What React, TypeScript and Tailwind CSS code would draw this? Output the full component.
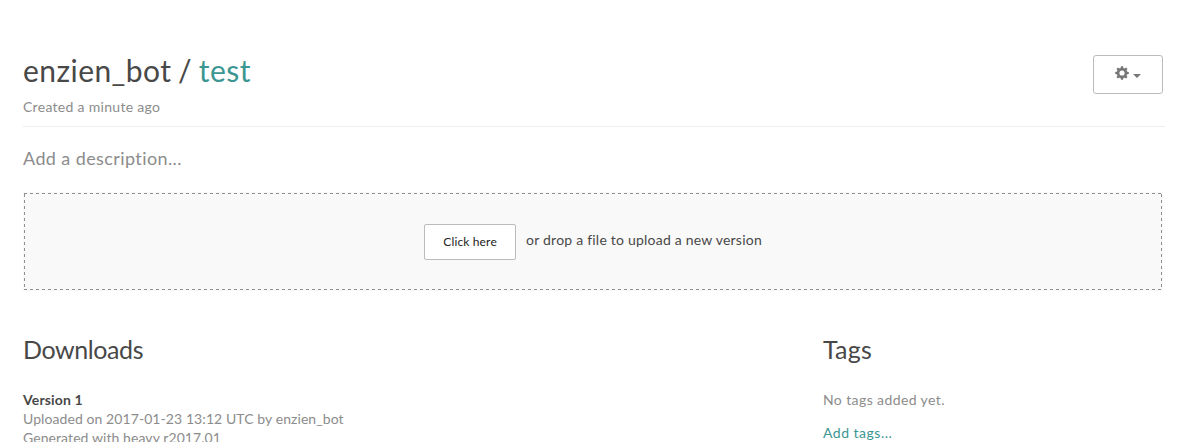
import type { ReactNode } from "react";

const teeth = [0, 45, 90, 135, 180, 225, 270, 315];

function Gear() {
  return (
    <svg className="-mt-px size-3.5" viewBox="-7 -7 14 14" aria-hidden="true">
      <circle r="3.9" fill="none" stroke="#777" strokeWidth="2.6" />
      {teeth.map((a) => (
        <path key={a} d="M-1.5-4.6L-1-6.8H1L1.5-4.6Z" fill="#777" transform={`rotate(${a})`} />
      ))}
    </svg>
  );
}

function DashRow() {
  return <div className="h-px bg-[repeating-linear-gradient(90deg,#8f8f8f_0_3px,transparent_3px_6px)]" />;
}

function DashColumn() {
  return <div className="w-px bg-[repeating-linear-gradient(180deg,#8f8f8f_0_3px,transparent_3px_6px)]" />;
}

function SectionTitle({ children }: { children: ReactNode }) {
  return <h2 className="text-[25px] leading-[34px] text-[#484848]">{children}</h2>;
}

export default function App() {
  return (
    <main className="h-[442px] overflow-hidden bg-white pl-[23px] pr-[25px] pt-[50px] font-['Lato',sans-serif] text-sm text-[#484848]">
      <header className="flex h-[77px] items-start justify-between border-b border-[#eee]">
        <div>
          <h1 className="whitespace-nowrap text-[30px] leading-[40px] tracking-[0.45px] [word-spacing:-1.5px]">
            enzien_bot / <a className="text-[#3c9691]">test</a>
          </h1>
          <p className="mt-[7px] text-sm leading-5 tracking-[0.3px] text-[#8c8c8c]">Created a minute ago</p>
        </div>
        <button
          aria-label="Settings"
          className="mr-[2px] mt-[5px] flex h-[39px] w-[70px] items-center justify-center gap-1 rounded-[3px] border border-[#bbb] bg-white pb-[2px]"
        >
          <Gear />
          <svg className="mt-[5px] h-1 w-2" viewBox="0 0 8 4" aria-hidden="true">
            <path d="M0 0H8L4 4Z" fill="#777" />
          </svg>
        </button>
      </header>

      <p className="mt-[19px] text-lg leading-6 tracking-[0.4px] text-[#8c8c8c]">Add a description...</p>

      <section className="mr-[2px] mt-[22px] flex h-[99px] flex-col bg-[#f9f9f9] p-px">
        <DashRow />
        <div className="flex flex-1">
          <DashColumn />
          <div className="flex flex-1 items-center justify-center">
            <button className="h-9 w-[92px] rounded-[2px] border border-[#bbb] bg-white text-xs tracking-[0.15px] text-[#222]">
              Click here
            </button>
            <span className="mb-[4px] ml-[10px] whitespace-nowrap tracking-[0.22px]">
              or drop a file to upload a new version
            </span>
          </div>
          <DashColumn />
        </div>
        <DashRow />
      </section>

      <div className="mt-[41px] flex">
        <section className="w-[800px] tracking-[-0.4px]">
          <SectionTitle>Downloads</SectionTitle>
          <div className="mt-[24px] leading-[19px] tracking-[0.08px] text-[#8c8c8c]">
            <h3 className="font-bold tracking-[0.15px] text-[#484848]">Version 1</h3>
            <p>Uploaded on 2017-01-23 13:12 UTC by enzien_bot</p>
            <p>Generated with heavy r2017.01</p>
          </div>
        </section>
        <section className="tracking-[0.2px]">
          <SectionTitle>Tags</SectionTitle>
          <p className="mt-[24px] leading-[19px] tracking-[0.4px] text-[#8c8c8c]">No tags added yet.</p>
          <a className="mt-[14px] block leading-[19px] tracking-[0.5px] text-[#3c9691]">Add tags...</a>
        </section>
      </div>
    </main>
  );
}
